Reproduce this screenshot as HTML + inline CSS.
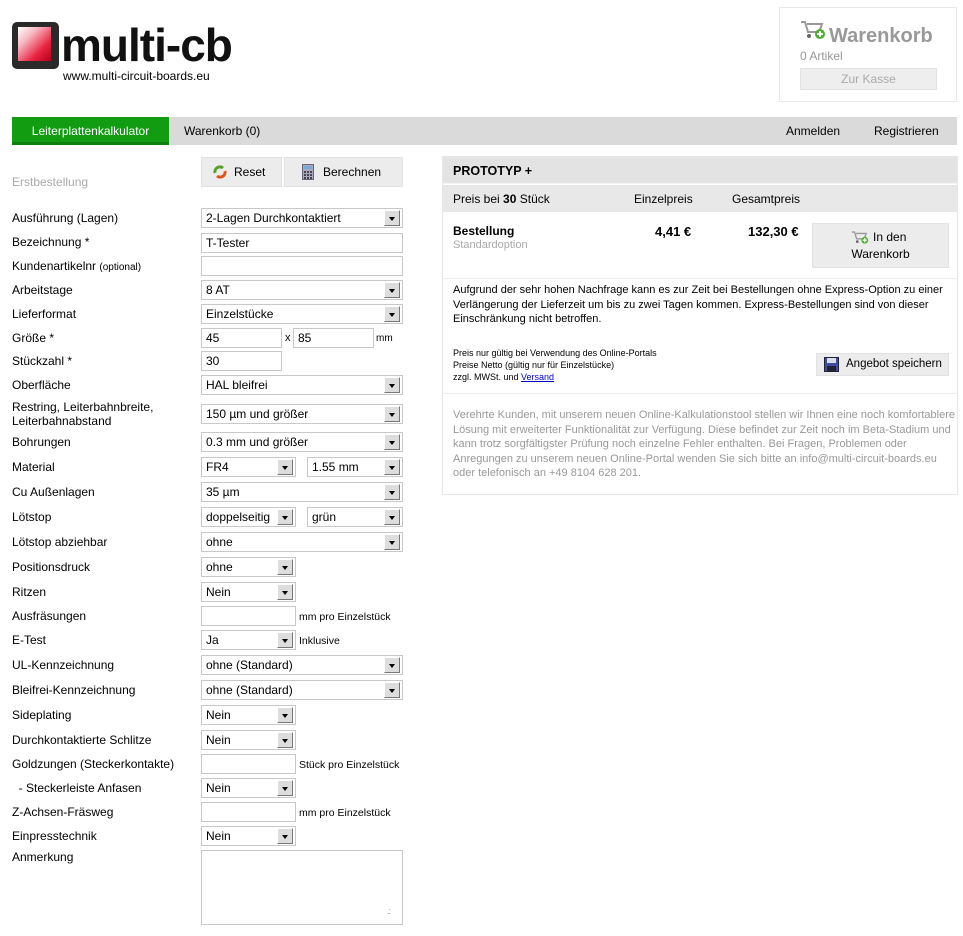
<!DOCTYPE html>
<html><head><meta charset="utf-8">
<style>
*{margin:0;padding:0;box-sizing:border-box}
body{width:963px;height:936px;background:#fff;font-family:"Liberation Sans",Arial,sans-serif;font-size:12px;color:#000;position:relative;overflow:hidden}
.a{position:absolute}
.lbl{position:absolute;left:12px;font-size:12px;line-height:14px}
.sel,.inp{position:absolute;height:20px;border:1px solid #c8c8c8;background:#fff;font-size:12px;line-height:18px;padding-left:4px}
.sel .ar{position:absolute;right:2px;top:1px;width:16px;height:16px;background:#ddd;border:1px solid;border-color:#fff #777 #777 #fff}
.sel .ar:after{content:"";position:absolute;left:4px;top:6px;border-left:3.5px solid transparent;border-right:3.5px solid transparent;border-top:4px solid #000}
.sm{font-size:11px}
.btn{position:absolute;background:#ececec;border:1px solid #e2e2e2}
</style></head><body>

<div class="a" style="left:12px;top:22px;width:47px;height:47px;background:#2a2a2a;border-radius:5px"></div>
<div class="a" style="left:18px;top:27px;width:33px;height:34px;background:linear-gradient(135deg,#fff 0%,#f7b9c3 30%,#e8213f 70%,#b5001c 100%)"></div>
<div class="a" style="left:61px;top:20px;font-size:46px;font-weight:bold;letter-spacing:-1px;line-height:50px;color:#111">multi-cb</div>
<div class="a" style="left:63px;top:69px;font-size:12px;color:#000">www.multi-circuit-boards.eu</div>

<div class="a" style="left:779px;top:7px;width:178px;height:95px;border:1px solid #e8e8e8"></div>
<svg class="a" style="left:800px;top:19px" width="26" height="22" viewBox="0 0 26 22"><path d="M1 3h4l3 10h11l3-8H7" fill="none" stroke="#999" stroke-width="2"/><circle cx="9" cy="17" r="2" fill="#666"/><circle cx="18" cy="17" r="2" fill="#666"/><circle cx="20" cy="15" r="5" fill="#4caf2a"/><path d="M17 15h6M20 12v6" stroke="#fff" stroke-width="2"/></svg>
<div class="a" style="left:829px;top:25px;font-size:20px;font-weight:bold;color:#999">Warenkorb</div>
<div class="a" style="left:800px;top:49px;font-size:12px;color:#999">0 Artikel</div>
<div class="a" style="left:800px;top:68px;width:137px;height:22px;background:#eee;border:1px solid #e2e2e2;color:#aaa;text-align:center;line-height:20px">Zur Kasse</div>

<div class="a" style="left:12px;top:117px;width:945px;height:28px;background:#dadada"></div>
<div class="a" style="left:12px;top:117px;width:157px;height:28px;background:#129c12;border-bottom:3px solid #0d800d;color:#fff;line-height:28px;text-align:center">Leiterplattenkalkulator</div>
<div class="a" style="left:184px;top:124px">Warenkorb (0)</div>
<div class="a" style="left:786px;top:124px">Anmelden</div>
<div class="a" style="left:874px;top:124px">Registrieren</div>

<div class="btn" style="left:201px;top:157px;width:81px;height:30px"></div>
<svg class="a" style="left:212px;top:164px" width="16" height="16" viewBox="0 0 16 16"><path d="M3 9a5 5 0 0 1 8-5" fill="none" stroke="#5aa02c" stroke-width="3"/><path d="M13 7a5 5 0 0 1-8 5" fill="none" stroke="#e2521b" stroke-width="3"/></svg>
<div class="a" style="left:234px;top:165px">Reset</div>
<div class="btn" style="left:284px;top:157px;width:119px;height:30px"></div>
<svg class="a" style="left:302px;top:164px" width="12" height="16" viewBox="0 0 12 16"><rect x="0.5" y="0.5" width="11" height="15" fill="#aab" stroke="#667"/><rect x="2" y="2" width="8" height="3" fill="#7ad"/><path d="M2 7h2v2H2zM5 7h2v2H5zM8 7h2v2H8zM2 10h2v2H2zM5 10h2v2H5zM8 10h2v2H8zM2 13h2v2H2zM5 13h2v2H5zM8 13h2v2H8z" fill="#445"/></svg>
<div class="a" style="left:323px;top:165px">Berechnen</div>
<div class="a" style="left:12px;top:175px;color:#aaa">Erstbestellung</div>

<div class="lbl" style="top:211px">Ausführung (Lagen)</div>
<div class="lbl" style="top:235px">Bezeichnung *</div>
<div class="lbl" style="top:259px">Kundenartikelnr <span style="font-size:10px">(optional)</span></div>
<div class="lbl" style="top:283px">Arbeitstage</div>
<div class="lbl" style="top:307px">Lieferformat</div>
<div class="lbl" style="top:331px">Größe *</div>
<div class="lbl" style="top:354px">Stückzahl *</div>
<div class="lbl" style="top:378px">Oberfläche</div>
<div class="lbl" style="top:400px">Restring, Leiterbahnbreite,<br>Leiterbahnabstand</div>
<div class="lbl" style="top:435px">Bohrungen</div>
<div class="lbl" style="top:460px">Material</div>
<div class="lbl" style="top:485px">Cu Außenlagen</div>
<div class="lbl" style="top:510px">Lötstop</div>
<div class="lbl" style="top:535px">Lötstop abziehbar</div>
<div class="lbl" style="top:560px">Positionsdruck</div>
<div class="lbl" style="top:585px">Ritzen</div>
<div class="lbl" style="top:609px">Ausfräsungen</div>
<div class="lbl" style="top:633px">E-Test</div>
<div class="lbl" style="top:658px">UL-Kennzeichnung</div>
<div class="lbl" style="top:683px">Bleifrei-Kennzeichnung</div>
<div class="lbl" style="top:708px">Sideplating</div>
<div class="lbl" style="top:733px">Durchkontaktierte Schlitze</div>
<div class="lbl" style="top:757px">Goldzungen (Steckerkontakte)</div>
<div class="lbl" style="top:781px">&nbsp; - Steckerleiste Anfasen</div>
<div class="lbl" style="top:805px">Z-Achsen-Fräsweg</div>
<div class="lbl" style="top:829px">Einpresstechnik</div>
<div class="lbl" style="top:850px">Anmerkung</div>

<div class="sel" style="left:201px;top:208px;width:202px">2-Lagen Durchkontaktiert<span class="ar"></span></div>
<div class="inp" style="left:201px;top:233px;width:202px">T-Tester</div>
<div class="inp" style="left:201px;top:256px;width:202px"></div>
<div class="sel" style="left:201px;top:280px;width:202px">8 AT<span class="ar"></span></div>
<div class="sel" style="left:201px;top:304px;width:202px">Einzelstücke<span class="ar"></span></div>
<div class="inp" style="left:201px;top:328px;width:81px">45</div>
<div class="a" style="left:285px;top:332px;font-size:11px">x</div>
<div class="inp" style="left:293px;top:328px;width:81px">85</div>
<div class="a sm" style="left:376px;top:333px;font-size:10px">mm</div>
<div class="inp" style="left:201px;top:351px;width:81px">30</div>
<div class="sel" style="left:201px;top:375px;width:202px">HAL bleifrei<span class="ar"></span></div>
<div class="sel" style="left:201px;top:404px;width:202px">150 µm und größer<span class="ar"></span></div>
<div class="sel" style="left:201px;top:432px;width:202px">0.3 mm und größer<span class="ar"></span></div>
<div class="sel" style="left:201px;top:457px;width:95px">FR4<span class="ar"></span></div>
<div class="sel" style="left:307px;top:457px;width:96px">1.55 mm<span class="ar"></span></div>
<div class="sel" style="left:201px;top:482px;width:202px">35 µm<span class="ar"></span></div>
<div class="sel" style="left:201px;top:507px;width:95px">doppelseitig<span class="ar"></span></div>
<div class="sel" style="left:307px;top:507px;width:96px">grün<span class="ar"></span></div>
<div class="sel" style="left:201px;top:532px;width:202px">ohne<span class="ar"></span></div>
<div class="sel" style="left:201px;top:557px;width:95px">ohne<span class="ar"></span></div>
<div class="sel" style="left:201px;top:582px;width:95px">Nein<span class="ar"></span></div>
<div class="inp" style="left:201px;top:606px;width:95px"></div>
<div class="a sm" style="left:299px;top:611px;font-size:10.5px">mm pro Einzelstück</div>
<div class="sel" style="left:201px;top:630px;width:95px">Ja<span class="ar"></span></div>
<div class="a sm" style="left:299px;top:635px;font-size:10.5px">Inklusive</div>
<div class="sel" style="left:201px;top:655px;width:202px">ohne (Standard)<span class="ar"></span></div>
<div class="sel" style="left:201px;top:680px;width:202px">ohne (Standard)<span class="ar"></span></div>
<div class="sel" style="left:201px;top:705px;width:95px">Nein<span class="ar"></span></div>
<div class="sel" style="left:201px;top:730px;width:95px">Nein<span class="ar"></span></div>
<div class="inp" style="left:201px;top:754px;width:95px"></div>
<div class="a sm" style="left:299px;top:759px;font-size:10.5px">Stück pro Einzelstück</div>
<div class="sel" style="left:201px;top:778px;width:95px">Nein<span class="ar"></span></div>
<div class="inp" style="left:201px;top:802px;width:95px"></div>
<div class="a sm" style="left:299px;top:807px;font-size:10.5px">mm pro Einzelstück</div>
<div class="sel" style="left:201px;top:826px;width:95px">Nein<span class="ar"></span></div>
<div class="inp" style="left:201px;top:850px;width:202px;height:75px"></div>
<div class="a" style="left:387px;top:906px;font-size:9px;color:#999;letter-spacing:-1px">.:</div>

<div class="a" style="left:442px;top:156px;width:516px;height:339px;border:1px solid #e6e6e6"></div>
<div class="a" style="left:443px;top:157px;width:514px;height:27px;background:#e3e3e3;border-bottom:1px solid #f4f4f4"></div>
<div class="a" style="left:453px;top:164px;font-weight:bold;font-size:12.5px">PROTOTYP +</div>
<div class="a" style="left:443px;top:185px;width:514px;height:27px;background:#e8e8e8"></div>
<div class="a" style="left:453px;top:192px">Preis bei <b>30</b> Stück</div>
<div class="a" style="left:634px;top:192px">Einzelpreis</div>
<div class="a" style="left:732px;top:192px">Gesamtpreis</div>
<div class="a" style="left:453px;top:224px;font-weight:bold">Bestellung</div>
<div class="a" style="left:453px;top:239px;color:#aaa;font-size:11px">Standardoption</div>
<div class="a" style="left:655px;top:224px;font-weight:bold;font-size:13px">4,41 €</div>
<div class="a" style="left:748px;top:224px;font-weight:bold;font-size:13px">132,30 €</div>
<div class="btn" style="left:812px;top:223px;width:137px;height:45px"></div>
<svg class="a" style="left:851px;top:230px" width="18" height="15" viewBox="0 0 26 22"><path d="M1 3h4l3 10h11l3-8H7" fill="none" stroke="#999" stroke-width="2"/><circle cx="9" cy="17" r="2" fill="#666"/><circle cx="20" cy="15" r="5" fill="#4caf2a"/><path d="M17 15h6M20 12v6" stroke="#fff" stroke-width="2"/></svg>
<div class="a" style="left:873px;top:230px">In den</div>
<div class="a" style="left:812px;top:247px;width:137px;text-align:center">Warenkorb</div>
<div class="a" style="left:443px;top:278px;width:514px;border-top:1px solid #eee"></div>
<div class="a" style="left:453px;top:283px;width:500px;font-size:11px;line-height:14.5px">Aufgrund der sehr hohen Nachfrage kann es zur Zeit bei Bestellungen ohne Express-Option zu einer Verlängerung der Lieferzeit um bis zu zwei Tagen kommen. Express-Bestellungen sind von dieser Einschränkung nicht betroffen.</div>
<div class="a" style="left:453px;top:347px;font-size:9px;line-height:12px">Preis nur gültig bei Verwendung des Online-Portals<br>Preise Netto (gültig nur für Einzelstücke)<br>zzgl. MWSt. und <span style="color:#00c;text-decoration:underline">Versand</span></div>
<div class="btn" style="left:816px;top:353px;width:133px;height:23px"></div>
<svg class="a" style="left:824px;top:357px" width="15" height="15" viewBox="0 0 15 15"><rect x="0.5" y="0.5" width="14" height="14" fill="#3a4fa0" stroke="#223"/><rect x="3" y="1" width="9" height="5" fill="#dde"/><rect x="3" y="9" width="9" height="5" fill="#223"/></svg>
<div class="a" style="left:846px;top:358px;font-size:11.5px">Angebot speichern</div>
<div class="a" style="left:443px;top:393px;width:514px;border-top:1px solid #eee"></div>
<div class="a" style="left:453px;top:408px;font-size:11px;line-height:14.5px;color:#999;white-space:nowrap">Verehrte Kunden, mit unserem neuen Online-Kalkulationstool stellen wir Ihnen eine noch komfortablere<br>Lösung mit erweiterter Funktionalität zur Verfügung. Diese befindet zur Zeit noch im Beta-Stadium und<br>kann trotz sorgfältigster Prüfung noch einzelne Fehler enthalten. Bei Fragen, Problemen oder<br>Anregungen zu unserem neuen Online-Portal wenden Sie sich bitte an info@multi-circuit-boards.eu<br>oder telefonisch an +49 8104 628 201.</div>
</body></html>
